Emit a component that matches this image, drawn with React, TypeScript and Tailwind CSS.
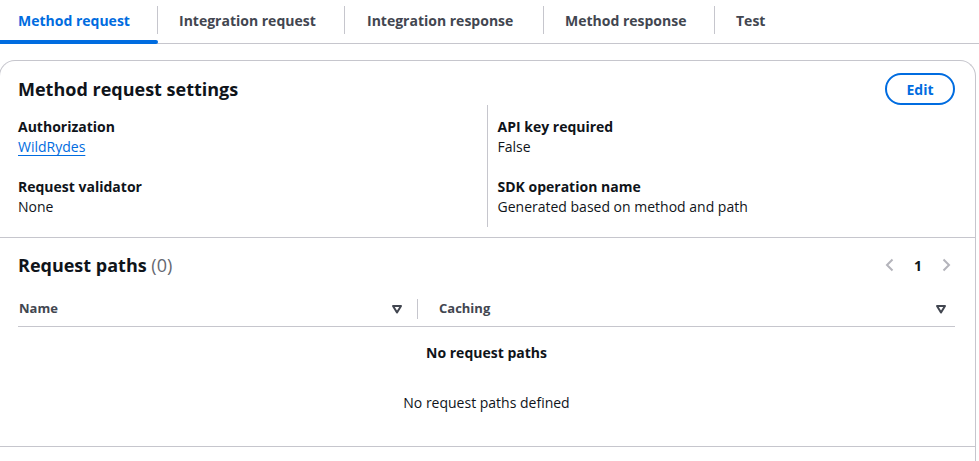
import React from 'react';

const tabs = [
    { label: 'Method request', cls: 'w-[157px] pl-[18px]' },
    { label: 'Integration request', cls: 'w-[186px] pl-[21px]' },
    { label: 'Integration response', cls: 'w-[198px] pl-[22px]' },
    { label: 'Method response', cls: 'w-[170px] pl-[21px]' },
    { label: 'Test', cls: 'pl-[21px]' },
];

const SortIcon: React.FC = () => (
    <svg width="12" height="12" viewBox="0 0 12 12" className="text-[#424650]">
        <path d="M2 3h8L6 9.5z" fill="none" stroke="currentColor" strokeWidth="2" strokeLinejoin="round" />
    </svg>
);

const Chevron: React.FC<{ dir: 'left' | 'right' }> = ({ dir }) => (
    <svg width="16" height="16" viewBox="0 0 16 16" className="text-[#b4b4bb]">
        <path
            d={dir === 'left' ? 'M10.5 2.5 5 8l5.5 5.5' : 'M5.5 2.5 11 8l-5.5 5.5'}
            fill="none"
            stroke="currentColor"
            strokeWidth="2"
        />
    </svg>
);

const Field: React.FC<{ label: string; children: React.ReactNode }> = ({ label, children }) => (
    <div className="flex flex-col">
        <span className="text-[14px] font-bold leading-[20px] text-[#0f141a]">{label}</span>
        <span className="text-[14px] leading-[20px] text-[#0f141a]">{children}</span>
    </div>
);

export default function App() {
    return (
        <div className="w-[979px] h-[461px] overflow-hidden bg-white font-['Open_Sans',sans-serif]">
            {/* tabs */}
            <div className="flex h-[44px] border-b border-[#c6c6cd]">
                {tabs.map((t, i) => (
                    <div key={t.label} className="relative flex items-center">
                        <div
                            className={`flex h-full items-center pb-[3px] text-[14px] font-bold ${t.cls} ${
                                i === 0 ? 'text-[#006ce0]' : 'text-[#424650]'
                            }`}
                        >
                            {t.label}
                        </div>
                        {i < tabs.length - 1 && <div className="h-[28px] w-px -mt-[4px] bg-[#c6c6cd]" />}
                        {i === 0 && (
                            <div className="absolute left-0 right-0 bottom-[-1px] h-[4px] rounded-r-full bg-[#006ce0]" />
                        )}
                    </div>
                ))}
            </div>

            {/* card */}
            <div className="mt-[16px] ml-[-1px] w-[977px] rounded-t-2xl border border-b-0 border-[#c6c6cd]">
                <div className="pl-[18px] pr-[20px] pt-[12px] pb-[10px]">
                    <div className="flex items-center justify-between">
                        <h2 className="text-[18px] font-bold leading-[30px] text-[#0f141a]">Method request settings</h2>
                        <button className="h-[32px] w-[70px] rounded-full border-2 border-[#006ce0] text-[14px] font-bold text-[#006ce0]">
                            Edit
                        </button>
                    </div>
                    <div className="grid grid-cols-2">
                        <div className="flex flex-col gap-[20px] pt-[12px] pb-[10px] pr-[10px]">
                            <Field label="Authorization">
                                <a className="text-[#006ce0] underline underline-offset-[3px]">WildRydes</a>
                            </Field>
                            <Field label="Request validator">None</Field>
                        </div>
                        <div className="flex flex-col gap-[20px] border-l border-[#c6c6cd] pl-[10px] pt-[12px] pb-[10px]">
                            <Field label="API key required">False</Field>
                            <Field label="SDK operation name">Generated based on method and path</Field>
                        </div>
                    </div>
                </div>

                <div className="border-t border-[#c6c6cd] pl-[18px] pr-[20px] pt-[14px]">
                    <div className="flex items-center justify-between">
                        <h2 className="text-[18px] font-bold leading-[26px] text-[#0f141a]">
                            Request paths <span className="font-normal text-[#656871]">(0)</span>
                        </h2>
                        <div className="mr-[1px] flex items-center gap-[16px]">
                            <Chevron dir="left" />
                            <span className="text-[14px] font-bold text-[#0f141a]">1</span>
                            <Chevron dir="right" />
                        </div>
                    </div>

                    <div className="mt-[19px] flex h-[24px] items-center">
                        <div className="flex flex-1 items-center justify-between pl-[1px]">
                            <span className="text-[13px] font-bold text-[#424650]">Name</span>
                            <SortIcon />
                        </div>
                        <div className="ml-[14px] h-[20px] w-px bg-[#c6c6cd]" />
                        <div className="flex w-[537px] items-center justify-between pl-[21px] pr-[8px]">
                            <span className="text-[13px] font-bold text-[#424650]">Caching</span>
                            <SortIcon />
                        </div>
                    </div>
                    <div className="mt-[5px] h-px bg-[#c6c6cd]" />

                    <div className="flex flex-col items-center pt-[16px] pb-[33px]">
                        <span className="text-[14px] font-bold leading-[20px] text-[#0f141a]">No request paths</span>
                        <span className="mt-[30px] text-[14px] leading-[20px] text-[#0f141a]">No request paths defined</span>
                    </div>
                </div>
                <div className="border-t border-[#c6c6cd] h-[20px]" />
            </div>
        </div>
    );
}
